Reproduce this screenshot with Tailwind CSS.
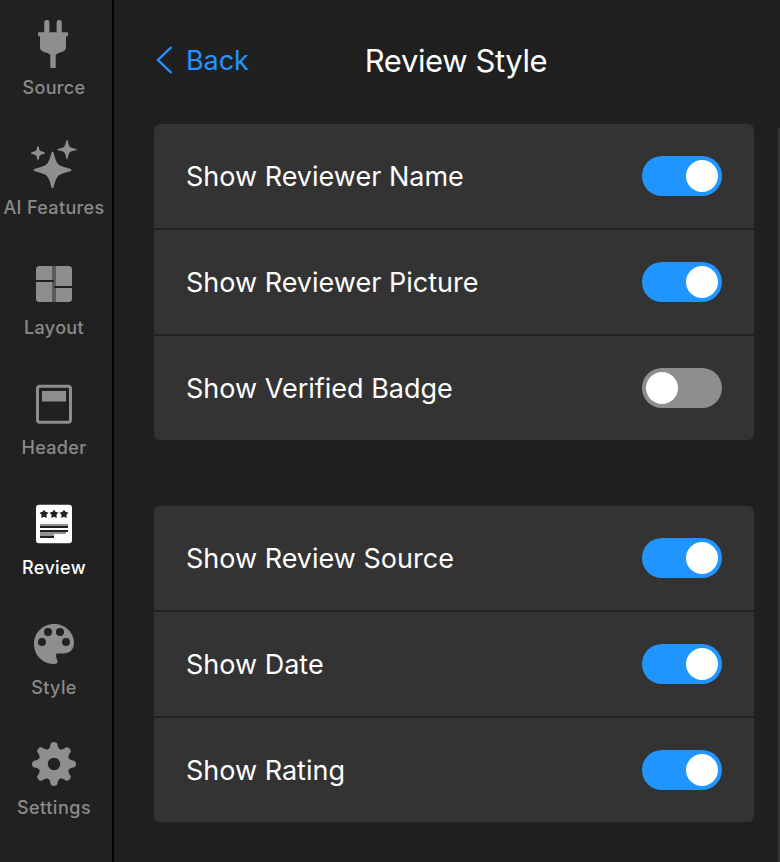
<!DOCTYPE html>
<html lang="en">
<head>
  <meta charset="UTF-8">
  <meta name="viewport" content="width=device-width, initial-scale=1.0">
  <title>Review Style</title>
  <script src="https://cdn.jsdelivr.net/npm/@tailwindcss/browser@4"></script>
</head>
<body class="flex h-screen overflow-hidden bg-[#202020] font-['Inter',sans-serif] text-white antialiased">

  <!-- Sidebar -->
  <nav class="flex w-[114px] shrink-0 flex-col border-r-2 border-black bg-[#212121] pr-1 text-[18px] leading-5 font-medium text-[#8a8a8a]">
    <a class="flex h-[120px] flex-col items-center gap-2.5 pt-5">
      <svg class="size-12 shrink-0" viewBox="0 0 48 48" fill="#8e8e8e">
        <rect x="14.2" y="0" width="5.2" height="14" rx="2.4"/>
        <rect x="26.6" y="0" width="5.2" height="14" rx="2.4"/>
        <rect x="8" y="12.300" width="30" height="4" rx=".8"/>
        <path d="M10 15h26v12.500c0 3.500-4 4.500-7.500 5.500L26 34.500h-6L17.500 33C14 32 10 31 10 27.500z"/>
        <rect x="20.300" y="31" width="5.400" height="17"/>
      </svg>
      <span class="whitespace-nowrap tracking-[0.35px]">Source</span>
    </a>
    <a class="flex h-[120px] flex-col items-center gap-2.5 pt-5">
      <svg class="size-12 shrink-0" viewBox="0 0 48 48" fill="#8e8e8e">
        <path d="M22.500 11.500c1.500 0 1.500 5.500 4 10 1.500 3 2.500 3.500 5 4.500 4.500 2 10 2.500 10 4s-5.500 2-10 4c-2.500 1-3.500 1.500-5 4.500-2.500 4.500-2.500 10-4 10s-1.500-5.500-4-10c-1.500-3-2.500-3.500-5-4.500-4.500-2-10-2.500-10-4s5.500-2 10-4c2.500-1 3.500-1.500 5-4.500 2.500-4.500 2.500-10 4-10z"/>
        <path d="M8 6c1 0 1 3.200 2 4.500 1.200 1.300 5 1.500 5 2.500s-3.800 1.200-5 2.500c-1 1.300-1 4.500-2 4.500s-1-3.200-2-4.500C4.800 14.200 1 14 1 13s3.800-1.200 5-2.500C7 9.200 7 6 8 6z"/>
        <path d="M37-.3c1 0 1 4.600 2.800 7 1.600 1.700 7.200 1.800 7.200 2.800s-5.600 1.200-7.200 2.800c-1.800 2.400-1.800 7.200-2.800 7.200s-1-4.800-2.800-7.200C32.600 10.700 27 10.500 27 9.500s5.600-1.100 7.200-2.800C36 4.300 36-.3 37-.3z"/>
      </svg>
      <span class="whitespace-nowrap tracking-[0.35px]">AI Features</span>
    </a>
    <a class="flex h-[120px] flex-col items-center gap-2.5 pt-5">
      <svg class="size-12 shrink-0" viewBox="0 0 48 48">
        <rect x="6" y="6" width="36" height="36" rx="3.500" fill="#8e8e8e"/>
        <path d="M22 6h4v36h-4z" fill="#5c5c5c"/>
        <path d="M6 20h18v2H6zM24 26h18v2H24z" fill="#212121"/>
      </svg>
      <span class="whitespace-nowrap tracking-[0.35px]">Layout</span>
    </a>
    <a class="flex h-[120px] flex-col items-center gap-2.5 pt-5">
      <svg class="size-12 shrink-0" viewBox="0 0 48 48">
        <rect x="7.500" y="6.300" width="33" height="36" rx="2.500" fill="none" stroke="#8e8e8e" stroke-width="3"/>
        <rect x="12" y="11" width="24" height="10.500" fill="#8e8e8e"/>
      </svg>
      <span class="whitespace-nowrap tracking-[0.35px]">Header</span>
    </a>
    <a class="flex h-[120px] flex-col items-center gap-2.5 pt-5 text-white">
      <svg class="size-12 shrink-0" viewBox="0 0 48 48">
        <rect x="6" y="4.700" width="36" height="38.600" rx="3" fill="#fff"/>
        <g fill="#212121">
          <path id="star" d="M14 9.700l1.400 2.100 3.100.900-2.100 2.100.400 3.200-2.800-1.300-2.800 1.300.400-3.200-2.100-2.100 3.100-.900z"/>
          <use href="#star" x="10"/>
          <use href="#star" x="20"/>
          <path d="M10 26h28v2H10zM10 30h28v2H10zM10 36h14v2H10z"/>
        </g>
        <path d="M10 24h28v2H10zM10 32h26v2H24v2H10z" fill="#909090"/>
      </svg>
      <span class="whitespace-nowrap tracking-[0.35px]">Review</span>
    </a>
    <a class="flex h-[120px] flex-col items-center gap-2.5 pt-5">
      <svg class="size-12 shrink-0" viewBox="0 0 48 48">
        <path d="M24 4C13 4 4 12.500 4 24s9 20 20 20c2.500 0 3.800-1 3.600-2.800-.1-1.200-1.400-2.400-1.400-4.400v-3.300H33c6.500 0 11-4 11-10.500C44 12 35 4 24 4z" fill="#8e8e8e"/>
        <g fill="#212121">
          <circle cx="18" cy="12" r="4"/>
          <circle cx="30" cy="12" r="4"/>
          <circle cx="12" cy="22" r="4"/>
          <circle cx="36" cy="22" r="4"/>
        </g>
      </svg>
      <span class="whitespace-nowrap tracking-[0.35px]">Style</span>
    </a>
    <a class="flex h-[120px] flex-col items-center gap-2.5 pt-5">
      <svg class="size-12 shrink-0" viewBox="0 0 48 48" fill="#8e8e8e">
        <circle cx="24" cy="24" r="15.500"/>
        <path id="teeth" d="M24 2c2 0 3.300 1 3.600 3l.6 2.500 2.800 3.500v26l-2.800 3.500-.6 2.500c-.3 2-1.600 3-3.600 3s-3.300-1-3.600-3l-.6-2.500L17 37V11l2.800-3.500.6-2.500c.3-2 1.600-3 3.600-3z"/>
        <use href="#teeth" transform="rotate(45 24 24)"/>
        <use href="#teeth" transform="rotate(90 24 24)"/>
        <use href="#teeth" transform="rotate(135 24 24)"/>
        <circle cx="24" cy="24" r="6.200" fill="#212121"/>
      </svg>
      <span class="whitespace-nowrap tracking-[0.5px]">Settings</span>
    </a>
  </nav>

  <!-- Settings panel -->
  <main class="flex-1 px-10 pr-6">
    <header class="grid h-[124px] grid-cols-[1fr_auto_1fr] items-start pt-10">
      <button class="flex h-10 items-center gap-3 text-[27px] text-[#2094ff]">
        <svg class="h-7 w-5" viewBox="0 0 20 28" fill="none" stroke="#2094ff" stroke-width="2.400">
          <path d="M17.500 1L4 14l13.500 13"/>
        </svg>
        <span class="pt-0.5 tracking-[-0.1px]">Back</span>
      </button>
      <h1 class="h-10 pt-px pl-1 text-[31px] leading-10 tracking-[-0.4px]">Review Style</h1>
    </header>

    <section class="mb-[66px] divide-y-2 divide-[#212121] overflow-hidden rounded-md bg-[#333] text-[27px]">
      <div class="flex h-[106px] items-center justify-between px-8">
        <span class="pt-0.5">Show Reviewer Name</span>
        <span class="flex h-10 w-20 justify-end rounded-full bg-[#2094ff] p-1"><i class="size-8 rounded-full bg-white"></i></span>
      </div>
      <div class="flex h-[106px] items-center justify-between px-8">
        <span class="pt-0.5">Show Reviewer Picture</span>
        <span class="flex h-10 w-20 justify-end rounded-full bg-[#2094ff] p-1"><i class="size-8 rounded-full bg-white"></i></span>
      </div>
      <div class="flex h-[104px] items-center justify-between px-8">
        <span class="pt-0.5">Show Verified Badge</span>
        <span class="flex h-10 w-20 rounded-full bg-[#8e8e8e] p-1"><i class="size-8 rounded-full bg-white"></i></span>
      </div>
    </section>

    <section class="divide-y-2 divide-[#212121] overflow-hidden rounded-md bg-[#333] text-[27px]">
      <div class="flex h-[106px] items-center justify-between px-8">
        <span class="pt-0.5">Show Review Source</span>
        <span class="flex h-10 w-20 justify-end rounded-full bg-[#2094ff] p-1"><i class="size-8 rounded-full bg-white"></i></span>
      </div>
      <div class="flex h-[106px] items-center justify-between px-8">
        <span class="pt-0.5">Show Date</span>
        <span class="flex h-10 w-20 justify-end rounded-full bg-[#2094ff] p-1"><i class="size-8 rounded-full bg-white"></i></span>
      </div>
      <div class="flex h-[104px] items-center justify-between px-8">
        <span class="pt-0.5">Show Rating</span>
        <span class="flex h-10 w-20 justify-end rounded-full bg-[#2094ff] p-1"><i class="size-8 rounded-full bg-white"></i></span>
      </div>
    </section>
  </main>

  <!-- Edge of the next panel -->
  <div class="mt-32 w-0.5 bg-[#333]"></div>
</body>
</html>
